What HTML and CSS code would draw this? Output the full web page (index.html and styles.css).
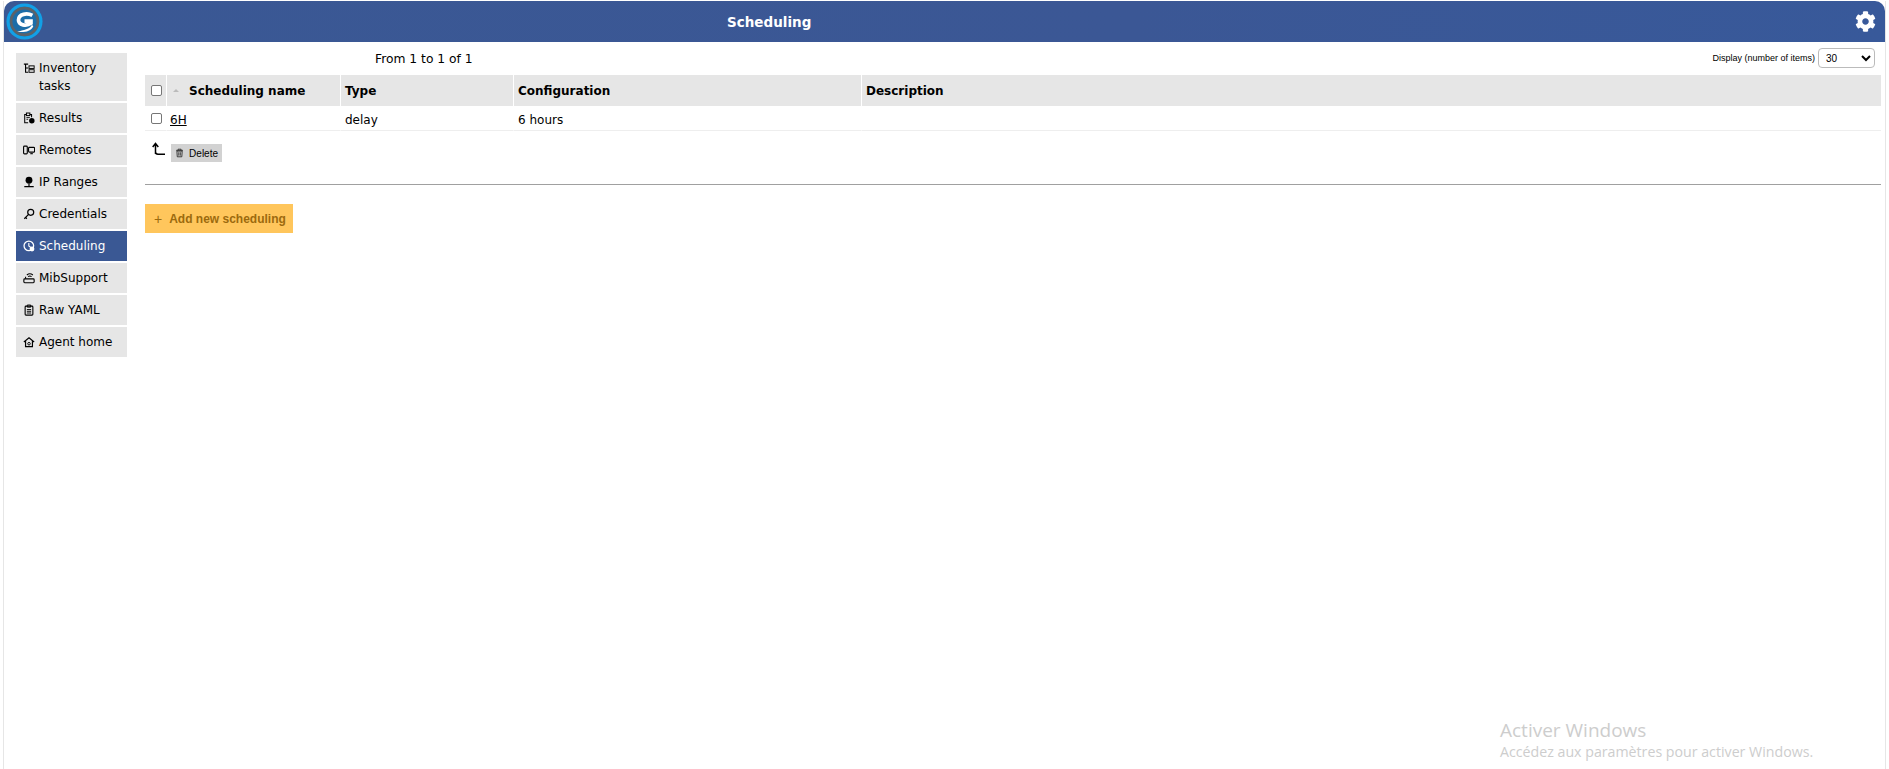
FILE: index.html
```html
<!DOCTYPE html>
<html lang="fr">
<head>
<meta charset="utf-8">
<title>Scheduling</title>
<link rel="stylesheet" href="styles.css">
</head>
<body>
<div class="page">
  <header class="topbar">
    <svg class="logo" viewBox="0 0 40 40" width="40" height="40">
      <circle cx="20" cy="20" r="19.500" fill="#12a0e6"/>
      <circle cx="20" cy="20" r="16" fill="#1c6da8"/>
      <circle cx="20" cy="20" r="14.500" fill="none" stroke="#5c6268" stroke-width="2.800"/>
      <path d="M28.500 13.500C23 10.500 13.500 11.500 13.500 18.500C13.500 24 22 25.500 27 22L27 19.500H20" fill="none" stroke="#fff" stroke-width="4"/>
      <path d="M28 23.500C26 28 19 29.500 12 31C19 32 27 31 29.500 25Z" fill="#fff"/>
    </svg>
    <h1 class="title">Scheduling</h1>
    <svg class="gear" viewBox="0 0 512 512" width="21" height="21"><path fill="#fff" d="M487.4 315.700l-42.600-24.600c4.300-23.200 4.300-47 0-70.200l42.600-24.600c4.900-2.800 7.100-8.600 5.500-14-11.100-35.600-30-67.800-54.700-94.600-3.800-4.100-10-5.100-14.800-2.300L380.800 110c-17.900-15.400-38.500-27.300-60.800-35.100V25.800c0-5.600-3.900-10.500-9.400-11.700-36.700-8.200-74.300-7.800-109.200 0-5.500 1.200-9.400 6.100-9.400 11.700V75c-22.200 7.900-42.800 19.800-60.800 35.100L88.700 85.500c-4.900-2.800-11-1.900-14.800 2.300-24.700 26.700-43.600 58.900-54.700 94.600-1.700 5.400.6 11.200 5.500 14L67.300 221c-4.300 23.200-4.300 47 0 70.200l-42.600 24.600c-4.900 2.800-7.100 8.600-5.500 14 11.100 35.600 30 67.800 54.700 94.600 3.800 4.100 10 5.100 14.800 2.300l42.600-24.600c17.900 15.400 38.500 27.300 60.800 35.100v49.200c0 5.600 3.900 10.500 9.400 11.700 36.700 8.200 74.300 7.800 109.200 0 5.500-1.200 9.400-6.100 9.400-11.700v-49.200c22.200-7.900 42.800-19.800 60.800-35.100l42.600 24.600c4.900 2.800 11 1.900 14.800-2.300 24.700-26.700 43.600-58.900 54.700-94.600 1.500-5.500-.7-11.300-5.600-14.100zM256 336c-44.100 0-80-35.900-80-80s35.900-80 80-80 80 35.900 80 80-35.900 80-80 80z"/></svg>
  </header>
  <div class="content">
    <nav class="menu">
      <a class="item tall"><svg class="ico" viewBox="0 0 14 14"><path d="M1 2.500h5M3 2.500V12h3M3 7h3" fill="none" stroke="currentColor" stroke-width="1.300"/><rect x="7" y="4.500" width="6" height="3" fill="none" stroke="currentColor" stroke-width="1.100"/><rect x="7" y="9" width="6" height="3" fill="none" stroke="currentColor" stroke-width="1.100"/></svg><span>Inventory tasks</span></a>
      <a class="item"><svg class="ico" viewBox="0 0 14 14"><path d="M6 12.500H2V3h2M8 3h2v3" fill="none" stroke="currentColor" stroke-width="1.200"/><rect x="4" y="1.200" width="4" height="3" fill="none" stroke="currentColor" stroke-width="1.200"/><path d="M4 6.500h4M4 8.500h2" stroke="currentColor" stroke-width="1"/><circle cx="10.300" cy="10.300" r="3.200" fill="currentColor"/></svg><span>Results</span></a>
      <a class="item"><svg class="ico" viewBox="0 0 14 14"><rect x="0.700" y="2.500" width="4.300" height="9" rx="1" fill="none" stroke="currentColor" stroke-width="1.300"/><rect x="6.500" y="4" width="7" height="5.500" rx="1" fill="none" stroke="currentColor" stroke-width="1.300"/><path d="M8.500 11.300h3" stroke="currentColor" stroke-width="1.300"/></svg><span>Remotes</span></a>
      <a class="item"><svg class="ico" viewBox="0 0 14 14"><circle cx="7" cy="5" r="4" fill="currentColor"/><path d="M7 9v3M1.500 12.500h11" stroke="currentColor" stroke-width="1.400"/></svg><span>IP Ranges</span></a>
      <a class="item"><svg class="ico" viewBox="0 0 14 14"><circle cx="9" cy="5" r="3.500" fill="none" stroke="currentColor" stroke-width="1.400"/><path d="M6.500 7.500L1.500 12.500M3 11l1.500 1.500" stroke="currentColor" stroke-width="1.400" fill="none"/></svg><span>Credentials</span></a>
      <a class="item active"><svg class="ico" viewBox="0 0 14 14"><circle cx="6.800" cy="6.800" r="5.600" fill="none" stroke="currentColor" stroke-width="1.500"/><path d="M6.800 3.500V7l2 1.500" fill="none" stroke="currentColor" stroke-width="1.300"/><circle cx="10.500" cy="10.500" r="2.800" fill="currentColor"/></svg><span>Scheduling</span></a>
      <a class="item"><svg class="ico" viewBox="0 0 14 14"><rect x="1" y="8" width="12" height="4.500" rx="1" fill="none" stroke="currentColor" stroke-width="1.300"/><path d="M6 5.500a3 3 0 0 1 4 0M4.500 3.500a5.500 5.500 0 0 1 7 0M3 8V5.500" fill="none" stroke="currentColor" stroke-width="1.200"/></svg><span>MibSupport</span></a>
      <a class="item"><svg class="ico" viewBox="0 0 14 14"><rect x="2.500" y="2.500" width="9" height="10.500" rx="1" fill="none" stroke="currentColor" stroke-width="1.300"/><path d="M5 1.200h4v2.500H5zM4.500 6.500h5M4.500 8.500h5M4.500 10.500h5" fill="none" stroke="currentColor" stroke-width="1.100"/></svg><span>Raw YAML</span></a>
      <a class="item"><svg class="ico" viewBox="0 0 14 14"><path d="M1 7l6-5 6 5M3 6v6.500h8V6" fill="none" stroke="currentColor" stroke-width="1.400"/><circle cx="7" cy="9" r="1.500" fill="none" stroke="currentColor" stroke-width="1.100"/></svg><span>Agent home</span></a>
    </nav>
    <main class="main">
      <div class="pager">
        <span class="count">From 1 to 1 of 1</span>
        <label class="display"><span>Display (number of items)</span>
          <select class="perpage"><option>30</option></select>
        </label>
      </div>
      <table class="grid">
        <colgroup><col class="c-check"><col class="c-name"><col class="c-type"><col class="c-conf"><col></colgroup>
        <thead>
          <tr>
            <th><span class="box"></span></th>
            <th><span class="sort"></span>Scheduling name</th>
            <th>Type</th>
            <th>Configuration</th>
            <th>Description</th>
          </tr>
        </thead>
        <tbody>
          <tr>
            <td><span class="box"></span></td>
            <td class="cell first"><a class="link">6H</a></td>
            <td class="cell">delay</td>
            <td class="cell">6 hours</td>
            <td></td>
          </tr>
        </tbody>
      </table>
      <div class="actions">
        <svg class="arrow" viewBox="0 0 14 14" width="14" height="14"><path d="M3.500 12V2M0.700 5L3.500 1.500 6.300 5M3.500 10C3.500 11.500 4.500 12.200 6 12.200H13" fill="none" stroke="#000" stroke-width="1.500"/></svg>
        <button class="delete"><svg viewBox="0 0 12 12" width="10" height="10"><path d="M1.500 2.500h9M4 2.500V1h4v1.500M2.500 3.500l.5 7.500h6l.5-7.500zM5 5v4.500M7 5v4.500" fill="none" stroke="#222" stroke-width="1.100"/></svg>Delete</button>
      </div>
      <hr class="rule">
      <button class="add"><span class="plus">+</span>Add new scheduling</button>
    </main>
  </div>
  <div class="activation">
    <div class="a1">Activer Windows</div>
    <div class="a2">Accédez aux paramètres pour activer Windows.</div>
  </div>
</div>
</body>
</html>
```

FILE: styles.css
```css
* { box-sizing: border-box; }
html, body { margin: 0; padding: 0; height: 100%; background: #fff; overflow: hidden; }
body { font-family: "DejaVu Sans", Verdana, sans-serif; font-size: 12px; color: #000; }

.page {
  position: relative;
  height: 769px;
  margin: 1px 3px 0 3px;
  border-left: 1px solid #e6e6e6;
  border-right: 1px solid #e6e6e6;
}
.topbar {
  height: 41px;
  background: linear-gradient(90deg, #3a5894 0%, #3b5795 60%, #38599a 100%);
  border-radius: 10px 10px 0 0;
  display: flex;
  align-items: center;
  padding: 0 9px 0 2px;
}
.logo { display: block; width: 37px; height: 37px; flex: none; }
.title { margin: 0 auto 0 684px; font-size: 13.500px; font-weight: bold; color: #fff; }
.gear { display: block; }

.content { display: flex; padding: 6px 4px 0 12px; }
.menu { width: 111px; flex: none; display: flex; flex-direction: column; gap: 2px; margin-top: 5px; }
.item {
  min-height: 30px;
  padding: 6px 6px 6px 23px;
  background: #e6e6e6;
  position: relative;
  line-height: 18px;
  font-size: 12px;
  color: #000;
}
.item.tall { height: 48px; }
.item.active { background: #3a5894; color: #fff; }
.ico { position: absolute; left: 7px; top: 9px; width: 12px; height: 12px; }

.main { flex: 1; min-width: 0; padding-left: 18px; }
.pager { height: 27px; display: flex; align-items: flex-start; justify-content: space-between; padding-right: 6px; }
.count { margin-left: 230px; padding-top: 1px; font-size: 12.300px; line-height: 20px; }
.display { display: flex; align-items: center; gap: 3px; font-family: "Liberation Sans", Arial, sans-serif; font-size: 9px; }
.perpage { width: 57px; height: 20px; font-size: 10px; font-family: "Liberation Sans", Arial, sans-serif; border: 1px solid #bbb; border-radius: 4px; background: #fff; padding-left: 3px; }

.grid { width: 100%; border-collapse: separate; border-spacing: 0; table-layout: fixed; }
.c-check { width: 21px; }
.c-name { width: 174px; }
.c-type { width: 173px; }
.c-conf { width: 348px; }
.grid th { height: 31px; background: #e6e6e6; text-align: left; font-size: 12px; font-weight: bold; padding: 0 4px; border-left: 1px solid #fff; }
.grid th:first-child { border-left: 0; padding-left: 5px; }
.grid td { height: 25px; padding: 0 4px; border-bottom: 1px solid #eee; font-size: 12px; border-left: 1px solid transparent; }
.grid td:first-child { border-left: 0; padding-left: 5px; }
.grid td.cell { padding-top: 3px; }
.grid td.first { padding-left: 3px; }
.box { display: block; width: 11px; height: 11px; border: 1px solid #767676; border-radius: 2px; background: #fff; margin: 0 0 0 1px; }
.sort { display: inline-block; width: 0; height: 0; margin: 0 10px 1px 2px; border: 3px solid transparent; border-bottom-color: #bbb; border-top: 0; vertical-align: middle; }
.link { text-decoration: underline; color: #000; }

.actions { display: flex; align-items: flex-start; padding: 11px 0 0 7px; gap: 5px; }
.arrow { display: block; }
.delete {
  display: flex; align-items: center; gap: 5px;
  margin-top: 2px;
  height: 18px; width: 51px; padding: 0 4px;
  border: 0; background: #d2d2d2;
  font-family: "Liberation Sans", Arial, sans-serif; font-size: 10px; color: #000;
}
.rule { margin: 22px 0 0; border: 0; border-top: 1px solid #a0a0a0; }
.add {
  display: flex; align-items: center;
  margin-top: 19px;
  width: 148px; height: 29px;
  padding: 0 0 0 9px;
  border: 0; background: #ffc65c; text-align: left;
  font-family: "Liberation Sans", Arial, sans-serif; font-size: 12px; font-weight: bold; color: #9c6a0e;
}
.plus { font-weight: normal; font-size: 14px; margin-right: 7px; }

.activation { position: absolute; left: 1496px; top: 717px; color: #cdcdcd; font-family: "Open Sans", sans-serif; }
.a1 { font-size: 19px; line-height: 24px; }
.a2 { font-size: 14.200px; line-height: 20px; }
```
